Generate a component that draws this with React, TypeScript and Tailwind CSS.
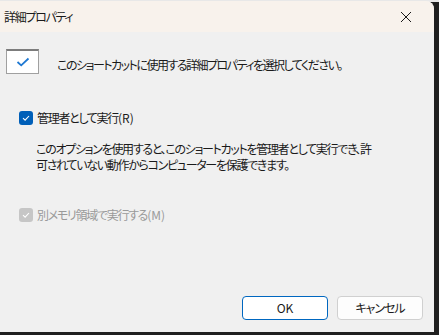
import React from "react";

const font = { fontFamily: '"Noto Sans CJK JP", "Noto Sans", sans-serif' };

function Check({ disabled }: { disabled?: boolean }) {
  return (
    <div
      className={
        "w-[14px] h-[14px] rounded-[3px] flex items-center justify-center shrink-0 " +
        (disabled ? "bg-[#c6c6c6]" : "bg-[#005fb8]")
      }
    >
      <svg width="10" height="10" viewBox="0 0 10 10">
        <path d="M2 5.2 L4.1 7.2 L8 3" fill="none" stroke="white" strokeWidth="1.1" />
      </svg>
    </div>
  );
}

export default function App() {
  return (
    <div className="w-[439px] h-[335px] bg-[#1f1f1f] overflow-hidden relative" style={font}>
      <div className="h-[2px] bg-[#e8e8e8]" />
      <div className="w-[434px] h-[331px] -mt-[1px] rounded-tr-[8px] bg-[#f0f0f0] overflow-hidden flex flex-col [font-feature-settings:'palt'] tracking-[-1.3px]">
        <div className="h-[31px] bg-[#f8f2ec] flex items-center justify-between pl-[4px] pr-[22px] shrink-0">
          <span className="text-[12px] text-[#1a1a1a] leading-none mt-[1px]">詳細プロパティ</span>
          <svg width="12" height="12" viewBox="0 0 12 12">
            <path d="M1 1 L11 11 M11 1 L1 11" stroke="#1a1a1a" strokeWidth="1" />
          </svg>
        </div>
        <div className="flex-1 flex flex-col">
          <div className="flex items-center mt-[17px] ml-[6px]">
            <div className="w-[33px] h-[25px] bg-white border border-[#a0a0a0] border-t-[#7c7c7c] border-t-[2px] flex items-center justify-center shrink-0">
              <svg width="14" height="12" viewBox="0 0 14 12">
                <path d="M1.5 6 L5.2 9.3 L12.5 2.5" fill="none" stroke="#1e78d2" strokeWidth="1.8" />
              </svg>
            </div>
            <span className="ml-[18px] mt-[6px] text-[12px] text-[#1a1a1a] leading-none whitespace-nowrap tracking-[-1.5px]">
              このショートカットに使用する詳細プロパティを選択してください。
            </span>
          </div>
          <div className="flex items-center mt-[37px] ml-[19px]">
            <Check />
            <span className="ml-[4px] text-[12px] text-[#1a1a1a] leading-none whitespace-nowrap">
              管理者として実行<span className="tracking-normal">(R)</span>
            </span>
          </div>
          <div className="ml-[36px] mt-[16px] text-[12px] text-[#1a1a1a] leading-[16px] whitespace-nowrap">
            <div>このオプションを使用すると、このショートカットを管理者として実行でき、許</div>
            <div>可されていない動作からコンピューターを保護できます。</div>
          </div>
          <div className="flex items-center mt-[35px] ml-[19px]">
            <Check disabled />
            <span className="ml-[4px] text-[12px] text-[#9a9a9a] leading-none whitespace-nowrap">
              別メモリ領域で実行する<span className="tracking-normal">(M)</span>
            </span>
          </div>
          <div className="flex-1" />
          <div className="flex justify-end gap-[9px] pr-[11px] mb-[12px] tracking-normal">
            <button className="w-[86px] h-[24px] rounded-[4px] bg-white border border-[#0067c0] text-[12px] text-[#1a1a1a] leading-none">
              OK
            </button>
            <button className="w-[86px] h-[24px] rounded-[4px] bg-[#fdfdfd] border border-[#d0d0d0] text-[12px] text-[#1a1a1a] leading-none tracking-[-1px]">
              キャンセル
            </button>
          </div>
        </div>
      </div>
    </div>
  );
}
